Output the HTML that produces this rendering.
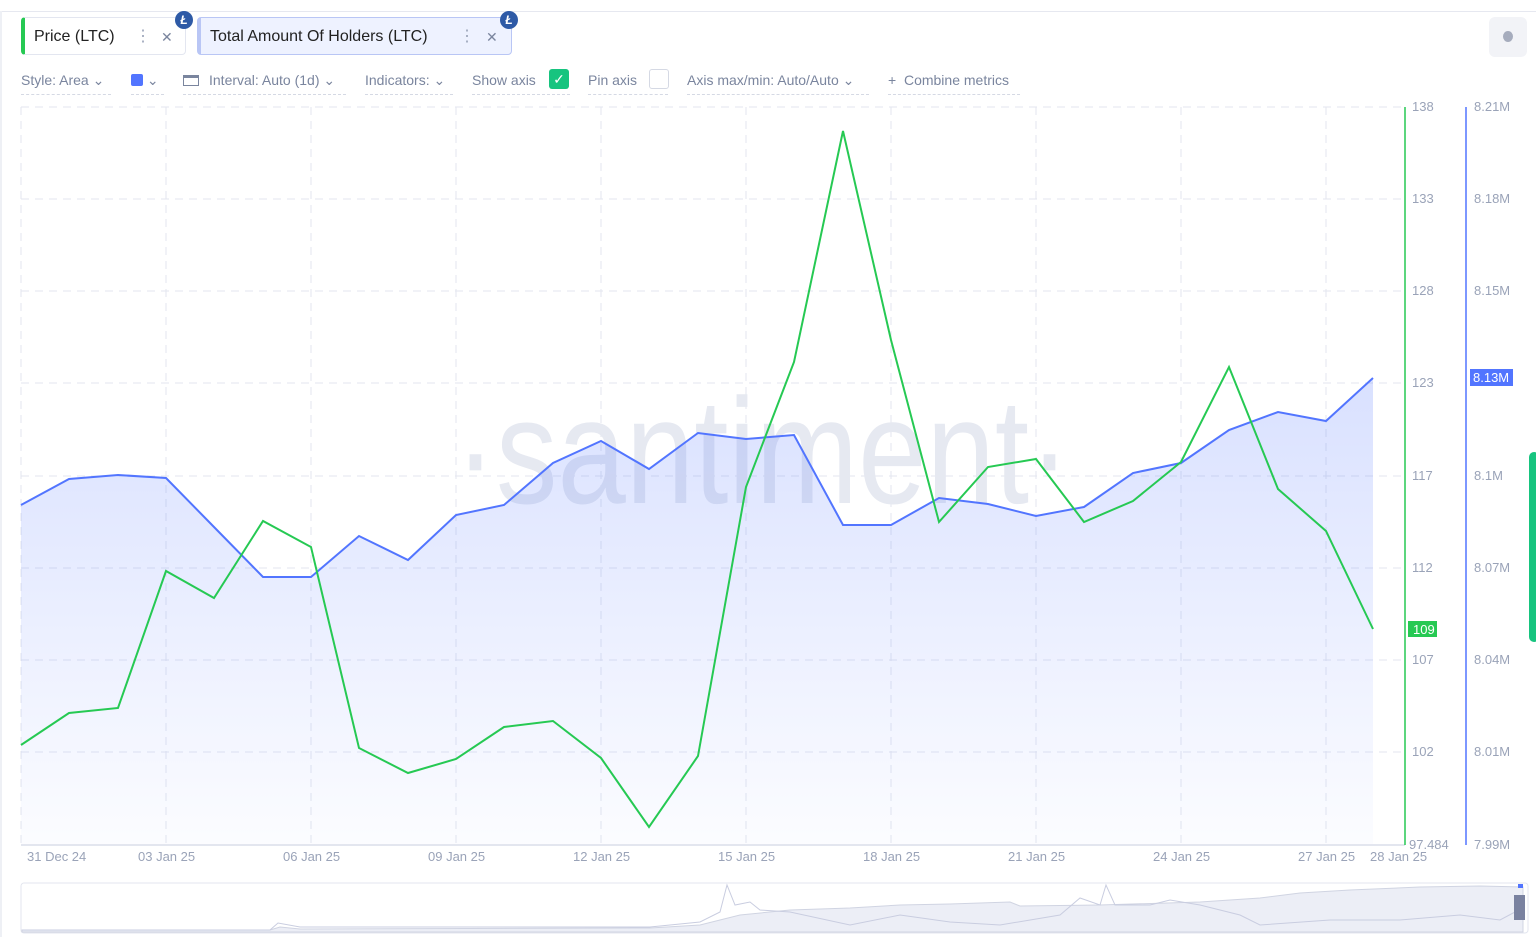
<!DOCTYPE html>
<html><head><meta charset="utf-8"><style>
body{margin:0;width:1536px;height:937px;background:#fff;font-family:"Liberation Sans",sans-serif;position:relative;overflow:hidden}
.tab{position:absolute;top:17px;height:38px;border:1px solid #e3e6f0;border-radius:4px;box-sizing:border-box;font-size:16px;color:#222;line-height:38px}
.tb{position:absolute;top:72px;font-size:14px;color:#7a859e;height:22px;border-bottom:1px dashed #d5d9e4}
.ltc{position:absolute;width:18px;height:18px;border-radius:50%;background:#2e5aa6;color:#fff;font-size:12px;font-weight:bold;text-align:center;line-height:18px;font-style:italic}
</style></head><body>
<div style="position:absolute;top:0;left:0;right:0;height:11px;border-bottom:1px solid #e6e8f0"></div>
<div style="position:absolute;left:0;top:11px;width:2px;height:926px;background:#eef0f5"></div>
<div class="tab" style="left:21px;width:165px;border-left:4px solid #26c953;padding-left:9px">Price (LTC)<span style="position:absolute;left:110px;color:#9aa3b8">⋮</span><span style="position:absolute;left:136px;color:#7a859e;font-size:14px">✕</span></div>
<div class="ltc" style="left:175px;top:11px">Ł</div>
<div class="tab" style="left:197px;width:315px;border-left:4px solid #5275ff;padding-left:9px;background:#eef2ff;border-color:#b9c6f5">Total Amount Of Holders (LTC)<span style="position:absolute;left:258px;color:#9aa3b8">⋮</span><span style="position:absolute;left:285px;color:#7a859e;font-size:14px">✕</span></div>
<div class="ltc" style="left:500px;top:11px">Ł</div>
<div style="position:absolute;left:1489px;top:17px;width:38px;height:40px;background:#f2f3f7;border-radius:6px"><div style="position:absolute;left:14px;top:14px;width:10px;height:11px;border-radius:50%;background:#a6acbd"></div></div>
<div class="tb" style="left:21px;width:90px">Style: Area ⌄</div>
<div class="tb" style="left:131px;width:33px"><span style="display:inline-block;width:12px;height:12px;background:#5275ff;border-radius:2px;vertical-align:-1px"></span> ⌄</div>
<div class="tb" style="left:183px;width:163px"><span style="display:inline-block;width:16px;height:11px;border:1px solid #7a859e;border-top-width:3px;box-sizing:border-box;vertical-align:-1px;margin-right:10px"></span>Interval: Auto (1d) ⌄</div>
<div class="tb" style="left:365px;width:88px">Indicators: ⌄</div>
<div class="tb" style="left:472px;width:98px">Show axis <span style="position:absolute;left:77px;top:-3px;width:20px;height:20px;background:#17c47f;border-radius:3px;color:#fff;font-size:14px;text-align:center;line-height:20px">✓</span></div>
<div class="tb" style="left:588px;width:80px">Pin axis <span style="position:absolute;left:61px;top:-3px;width:18px;height:18px;border:1px solid #d5d9e4;border-radius:3px"></span></div>
<div class="tb" style="left:687px;width:182px">Axis max/min: Auto/Auto ⌄</div>
<div class="tb" style="left:888px;width:132px">+&nbsp; Combine metrics</div>
<svg width="1536" height="937" style="position:absolute;left:0;top:0" font-family="Liberation Sans, sans-serif">
<defs><linearGradient id="g" x1="0" y1="0" x2="0" y2="1"><stop offset="0" stop-color="#5275ff" stop-opacity="0.22"/><stop offset="1" stop-color="#5275ff" stop-opacity="0.02"/></linearGradient></defs>
<g stroke="#e3e6ef" stroke-dasharray="8,6" stroke-width="1">
<path d="M21 107H1405M21 199H1405M21 291H1405M21 383H1405M21 476H1405M21 568H1405M21 660H1405M21 752H1405"/>
<path d="M21 107V845M166 107V845M311 107V845M456 107V845M601 107V845M746 107V845M891 107V845M1036 107V845M1181 107V845M1326 107V845"/>
</g>
<text x="455" y="503" font-size="150" fill="#e6e9f1" textLength="615" lengthAdjust="spacingAndGlyphs" font-family="Liberation Sans, sans-serif">·santiment·</text>
<path d="M21 505L69 479L118 475L166 478L214 527L263 577L311 577L359 536L408 560L456 515L504 505L553 463L601 441L649 469L698 433L746 439L794 435L843 525L891 525L939 498L988 504L1036 516L1084 507L1133 473L1181 463L1229 430L1278 412L1326 421L1373 378L1373 845L21 845Z" fill="url(#g)"/>
<path d="M21 505L69 479L118 475L166 478L214 527L263 577L311 577L359 536L408 560L456 515L504 505L553 463L601 441L649 469L698 433L746 439L794 435L843 525L891 525L939 498L988 504L1036 516L1084 507L1133 473L1181 463L1229 430L1278 412L1326 421L1373 378" fill="none" stroke="#5275ff" stroke-width="2"/>
<path d="M21 745L69 713L118 708L166 571L214 598L263 521L311 547L359 748L408 773L456 759L504 727L553 721L601 758L649 827L698 756L746 487L794 362L843 131L891 340L939 522L988 467L1036 459L1084 522L1133 501L1181 462L1229 367L1278 489L1326 531L1373 629" fill="none" stroke="#26c953" stroke-width="2"/>
<line x1="21" y1="845" x2="1405" y2="845" stroke="#e3e6ef" stroke-width="2"/>
<line x1="1405" y1="107" x2="1405" y2="845" stroke="#26c953" stroke-width="1.5"/>
<line x1="1466" y1="107" x2="1466" y2="845" stroke="#5275ff" stroke-width="1.5"/>
<g font-size="13" fill="#9aa3b8">
<text x="1412" y="111">138</text><text x="1412" y="203">133</text><text x="1412" y="295">128</text><text x="1412" y="387">123</text><text x="1412" y="480">117</text><text x="1412" y="572">112</text><text x="1412" y="664">107</text><text x="1412" y="756">102</text><text x="1409" y="849">97.484</text>
<text x="1474" y="111">8.21M</text><text x="1474" y="203">8.18M</text><text x="1474" y="295">8.15M</text><text x="1474" y="480">8.1M</text><text x="1474" y="572">8.07M</text><text x="1474" y="664">8.04M</text><text x="1474" y="756">8.01M</text><text x="1474" y="849">7.99M</text>
<text x="27" y="861">31 Dec 24</text><text x="138" y="861">03 Jan 25</text><text x="283" y="861">06 Jan 25</text><text x="428" y="861">09 Jan 25</text><text x="573" y="861">12 Jan 25</text><text x="718" y="861">15 Jan 25</text><text x="863" y="861">18 Jan 25</text><text x="1008" y="861">21 Jan 25</text><text x="1153" y="861">24 Jan 25</text><text x="1298" y="861">27 Jan 25</text><text x="1370" y="861">28 Jan 25</text>
</g>
<rect x="1408" y="621" width="29" height="16" fill="#26c953"/><text x="1413" y="634" font-size="13" fill="#fff">109</text>
<rect x="1470" y="369" width="43" height="17" fill="#5275ff"/><text x="1473" y="382" font-size="13" fill="#fff">8.13M</text>
<rect x="1529" y="452" width="10" height="190" rx="5" fill="#17c47f"/>
<rect x="21" y="883" width="1507" height="50" rx="3" fill="#fff" stroke="#e3e6ef"/>
<path d="M22 930L270 930L280 927L300 929L650 928L700 925L740 915L790 910L850 908L900 905L950 904L1010 902L1020 906L1100 905L1200 902L1260 898L1300 893L1350 890L1420 887L1480 886L1523 887L1523 932L22 932Z" fill="#eceef6" stroke="#d0d4e2"/>
<path d="M22 930L270 930L278 923L300 927L650 927L700 922L720 912L727 885L735 905L750 902L760 910L790 912L850 925L900 915L950 922L1000 925L1060 915L1080 898L1100 905L1106 885L1115 905L1150 905L1170 900L1200 905L1240 915L1260 925L1330 920L1400 920L1460 915L1500 920L1515 912" fill="none" stroke="#c9cde0"/>
<rect x="1514" y="895" width="11" height="25" fill="#7a82a0"/><rect x="1518" y="884" width="5" height="4" fill="#5275ff"/>
</svg>
</body></html>
